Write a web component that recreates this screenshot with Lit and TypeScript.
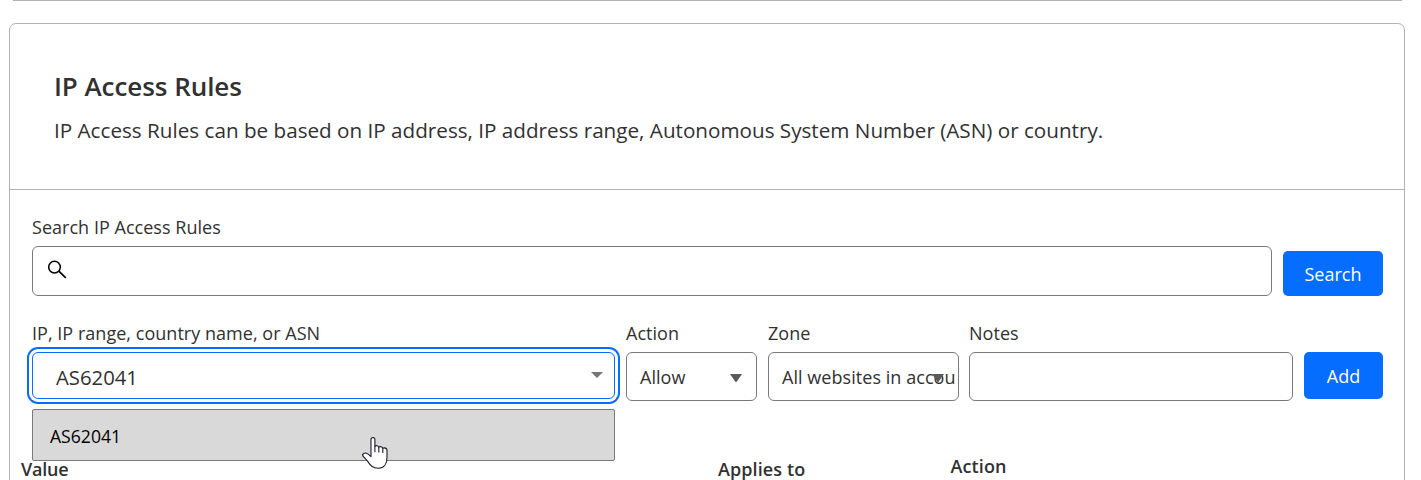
import { LitElement, html, css } from "lit";
import { customElement, property } from "lit/decorators.js";

@customElement("labelled-field")
export class LabelledField extends LitElement {
  @property() label = "";

  static styles = css`
    :host {
      display: flex;
      flex-direction: column;
      min-width: 0;
    }
    .label {
      height: 24px;
      line-height: 24px;
      margin-bottom: 7px;
      letter-spacing: 0.03px;
      white-space: nowrap;
    }
  `;

  render() {
    return html`<div class="label">${this.label}</div><slot></slot>`;
  }
}

@customElement("app-root")
export class AppRoot extends LitElement {
  static styles = css`
    :host {
      display: block;
      height: 480px;
      overflow: hidden;
      background: #fff;
      color: #313131;
      font-family: "Open Sans", "Noto Sans", sans-serif;
      font-size: 18px;
    }
    * {
      box-sizing: border-box;
    }
    .page {
      display: flex;
      flex-direction: column;
      gap: 22px;
      width: 1396px;
      margin-left: 9px;
    }
    .previous {
      height: 1px;
      margin: 0 3px 0 4px;
      background: #b2b2b2;
    }
    .card {
      height: 480px;
      border: 1px solid #b2b2b2;
      border-radius: 7px;
    }
    .intro {
      height: 166px;
      padding: 42px 44px 0;
      border-bottom: 1px solid #b2b2b2;
    }
    .title {
      margin: 0;
      font-size: 26px;
      line-height: 40px;
      font-weight: 600;
      letter-spacing: -0.06px;
    }
    .text {
      margin: 8px 0 0;
      font-size: 20.67px;
      line-height: 32px;
      white-space: nowrap;
    }
    .form {
      padding: 25px 21px 0 22px;
    }
    .row {
      display: flex;
      align-items: flex-end;
      gap: 11px;
    }
    .grow {
      flex: 1;
    }
    .box {
      display: flex;
      align-items: center;
      height: 49px;
      border: 1px solid #797979;
      border-radius: 6px;
      background: #fff;
      position: relative;
      white-space: nowrap;
    }
    .search {
      height: 50px;
      padding: 0 0 2px 15px;
    }
    .btn {
      display: flex;
      align-items: center;
      justify-content: center;
      border: 0;
      border-radius: 5px;
      padding: 0;
      background: #056dff;
      color: #fff;
      font: inherit;
    }
    .btn-search {
      width: 100px;
      height: 45px;
    }
    .btn-add {
      width: 79px;
      height: 47px;
    }
    .rules {
      align-items: flex-start;
      margin-top: 25px;
    }
    .rules .btn-add {
      margin-top: 31px;
    }
    .f-ip {
      width: 583px;
    }
    .f-action {
      width: 131px;
    }
    .f-zone {
      width: 191px;
      margin-right: -1px;
    }
    .combo {
      height: 47px;
      padding: 2px 11px 0 23px;
      justify-content: space-between;
      border-color: #056dff;
      box-shadow: 0 0 0 3px #fff, 0 0 0 5px #056dff;
      font-size: 20.3px;
    }
    .combo svg {
      margin-top: -4px;
    }
    .select {
      padding: 0 14px 0 13px;
      justify-content: space-between;
    }
    .select span {
      letter-spacing: 0.05px;
    }
    .select svg {
      margin-top: 2px;
    }
    .select .over {
      position: absolute;
      right: 14px;
      top: 19px;
    }
    .anchor {
      position: relative;
    }
    .menu {
      position: absolute;
      z-index: 2;
      left: 0;
      top: 57px;
      width: 583px;
      height: 52px;
      padding: 1px 0 0 17px;
      display: flex;
      align-items: center;
      border: 1px solid #797979;
      border-radius: 2px;
      background: #d9d9d9;
      color: #000;
      font-size: 17.6px;
    }
    .pointer {
      position: absolute;
      left: 329px;
      top: 26px;
    }
    .heads {
      display: grid;
      grid-template-columns: 697px 232.5px 1fr;
      padding: 56px 0 0 11px;
      font-weight: 600;
      line-height: 24px;
    }
    .head-applies {
      letter-spacing: 0.1px;
    }
    .head-value {
      letter-spacing: -0.2px;
    }
    .head-action {
      margin-top: -3px;
      letter-spacing: 0.1px;
    }
    svg {
      display: block;
      flex: none;
    }
  `;

  private caret(extra = "") {
    return html`<svg class=${extra} width="12" height="8" viewBox="0 0 12 8">
      <path d="M0 0H12L6.8 7.4Q6 8.4 5.2 7.4Z" fill="#595959" />
    </svg>`;
  }

  render() {
    return html`
      <div class="page">
        <div class="previous"></div>
        <section class="card">
          <header class="intro">
            <h2 class="title">IP Access Rules</h2>
            <p class="text">IP Access Rules can be based on IP address, IP address range, Autonomous System Number (ASN) or country.</p>
          </header>
          <div class="form">
            <div class="row">
              <labelled-field class="grow" label="Search IP Access Rules">
                <div class="box search">
                  <svg width="20" height="20" viewBox="0 0 20 20" fill="none" stroke="#000">
                    <circle cx="6.5" cy="7.1" r="5.8" stroke-width="1.5" />
                    <path d="M10.8 11.2L17.8 17.9" stroke-width="1.7" />
                  </svg>
                </div>
              </labelled-field>
              <button class="btn btn-search">Search</button>
            </div>
            <div class="row rules">
              <labelled-field class="f-ip" label="IP, IP range, country name, or ASN">
                <div class="anchor">
                  <div class="box combo">
                    <span>AS62041</span>
                    <svg width="12" height="6" viewBox="0 0 12 6"><path d="M0 0H12L6 6Z" fill="#6f777d" /></svg>
                  </div>
                  <div class="menu">
                    <span>AS62041</span>
                    <svg class="pointer" width="28" height="34" viewBox="0 0 28 34">
                      <path
                        d="M9 18V3.8C9 .8 12.9 .8 12.9 3.8V10.2C14 9.2 16.5 9.6 16.8 11.1C18.2 10.2 20.4 10.7 20.8 12.2C22.5 11.4 25 12.1 25 14.3V21.5C25 27.8 22 32.3 16.5 32.3C10.5 32.3 8.3 29.3 5.7 25.4C4.2 23.2 2.7 21.8 1 20C-.2 18.4 2.2 16.4 4.5 17.2C6 17.7 7.4 19 9 20.7Z"
                        fill="#fff" stroke="#1a1a2b" stroke-width="1.1" stroke-linejoin="round" />
                      <path d="M12.9 10V16.3M16.8 11V16.4M20.8 12V17" fill="none" stroke="#1a1a2b" stroke-width="1.1" />
                    </svg>
                  </div>
                </div>
              </labelled-field>
              <labelled-field class="f-action" label="Action">
                <div class="box select"><span>Allow</span>${this.caret()}</div>
              </labelled-field>
              <labelled-field class="f-zone" label="Zone">
                <div class="box select"><span>All websites in accou</span>${this.caret("over")}</div>
              </labelled-field>
              <labelled-field class="grow" label="Notes">
                <div class="box"></div>
              </labelled-field>
              <button class="btn btn-add">Add</button>
            </div>
          </div>
          <div class="heads">
            <span class="head-value">Value</span>
            <span class="head-applies">Applies to</span>
            <span class="head-action">Action</span>
          </div>
        </section>
      </div>
    `;
  }
}
